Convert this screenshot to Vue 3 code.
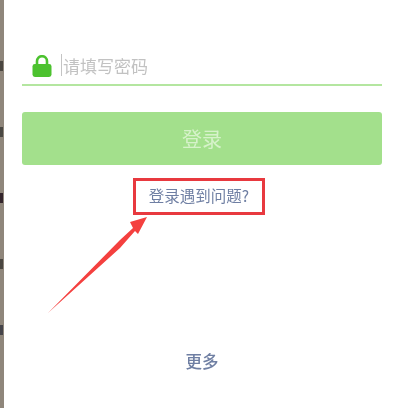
<script setup>
const marks = [
  { id: 1, dark: '#4a4640' },
  { id: 2, dark: '#4a4843' },
  { id: 3, dark: '#33252c' },
  { id: 4, dark: '#4a4640' },
  { id: 5, dark: '#45444a' },
]
</script>

<template>
  <div class="page">
    <aside class="strip">
      <i v-for="m in marks" :key="m.id" class="mark" :style="{ background: m.dark }"></i>
    </aside>
    <main class="content">
      <div class="field">
        <svg class="lock" width="20" height="22" viewBox="0 0 20 22">
          <path d="M5 11V6.2a5 5 0 0 1 10 0V11" fill="none" stroke="#4cc22f" stroke-width="2.6" />
          <rect x="0.5" y="9" width="19" height="13" rx="2.4" fill="#4cc22f" />
        </svg>
        <span class="caret"></span>
        <span class="placeholder">请填写密码</span>
      </div>
      <div class="submit">登录</div>
      <div class="help-wrap">
        <div class="help">登录遇到问题?</div>
        <svg class="arrow" width="110" height="110" viewBox="0 0 110 110">
          <path d="M4 101 L76 28 L89 16 L86 10 L103 5 L94 22 L91 19 L76 36 Z" fill="#f4403f" />
        </svg>
      </div>
      <div class="more">更多</div>
    </main>
  </div>
</template>

<style scoped>
.page {
  width: 400px;
  height: 408px;
  display: flex;
  overflow: hidden;
  background: #fff;
  font-family: "Noto Sans CJK SC", "Liberation Sans", sans-serif;
}
.strip {
  width: 4px;
  flex: none;
  background: #8f867b;
  display: flex;
  flex-direction: column;
  padding-top: 61px;
  gap: 56px;
}
.mark {
  display: block;
  width: 3px;
  height: 10px;
  filter: blur(0.7px);
}
.content {
  flex: 1;
  padding: 0 18px;
  display: flex;
  flex-direction: column;
  filter: blur(0.35px);
}
.field {
  margin-top: 46px;
  height: 38px;
  display: flex;
  align-items: center;
  border-bottom: 2px solid #b4e6a0;
}
.lock {
  margin-left: 10px;
  margin-top: 2px;
  flex: none;
}
.caret {
  width: 1px;
  height: 22px;
  margin-left: 9px;
  background: #c4c4c4;
}
.placeholder {
  margin-left: 1px;
  font-size: 17px;
  color: #c2c2c2;
}
.submit {
  margin-top: 26px;
  height: 53px;
  border-radius: 3px;
  background: #a3e08c;
  color: #d6f2ca;
  font-size: 20px;
  display: flex;
  align-items: center;
  justify-content: center;
}
.help-wrap {
  position: relative;
  display: flex;
  justify-content: center;
  margin-top: 13px;
}
.help {
  width: 132px;
  height: 37px;
  box-sizing: border-box;
  border: 3px solid #e8393f;
  padding-bottom: 4px;
  display: flex;
  align-items: center;
  justify-content: center;
  font-size: 15.5px;
  color: #6f7fa3;
  margin-left: -6px;
}
.arrow {
  position: absolute;
  left: 22px;
  top: 34px;
}
.more {
  margin-top: 134px;
  text-align: center;
  font-size: 16.5px;
  font-weight: 500;
  color: #6f7fa3;
}
</style>
